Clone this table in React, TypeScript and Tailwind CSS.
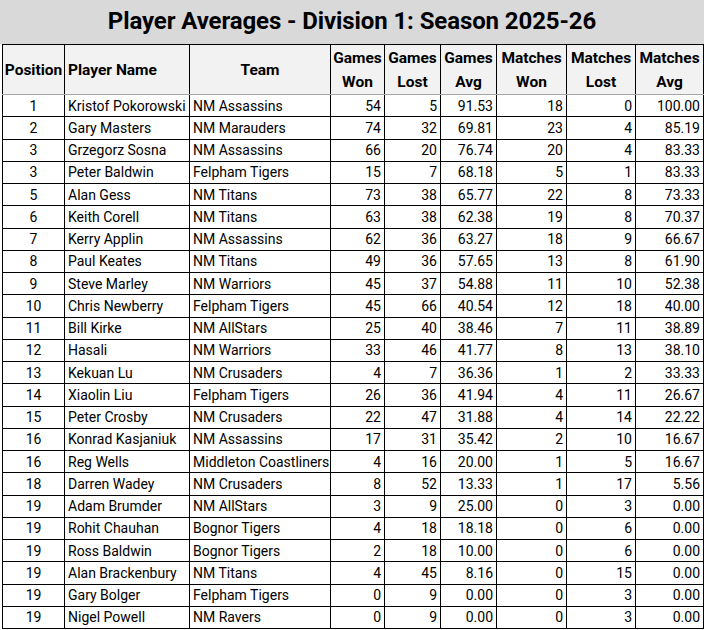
type Row = [string, string, string, number, number, string, number, number, string];

const ROWS: Row[] = [
  ["1", "Kristof Pokorowski", "NM Assassins", 54, 5, "91.53", 18, 0, "100.00"],
  ["2", "Gary Masters", "NM Marauders", 74, 32, "69.81", 23, 4, "85.19"],
  ["3", "Grzegorz Sosna", "NM Assassins", 66, 20, "76.74", 20, 4, "83.33"],
  ["3", "Peter Baldwin", "Felpham Tigers", 15, 7, "68.18", 5, 1, "83.33"],
  ["5", "Alan Gess", "NM Titans", 73, 38, "65.77", 22, 8, "73.33"],
  ["6", "Keith Corell", "NM Titans", 63, 38, "62.38", 19, 8, "70.37"],
  ["7", "Kerry Applin", "NM Assassins", 62, 36, "63.27", 18, 9, "66.67"],
  ["8", "Paul Keates", "NM Titans", 49, 36, "57.65", 13, 8, "61.90"],
  ["9", "Steve Marley", "NM Warriors", 45, 37, "54.88", 11, 10, "52.38"],
  ["10", "Chris Newberry", "Felpham Tigers", 45, 66, "40.54", 12, 18, "40.00"],
  ["11", "Bill Kirke", "NM AllStars", 25, 40, "38.46", 7, 11, "38.89"],
  ["12", "Hasali", "NM Warriors", 33, 46, "41.77", 8, 13, "38.10"],
  ["13", "Kekuan Lu", "NM Crusaders", 4, 7, "36.36", 1, 2, "33.33"],
  ["14", "Xiaolin Liu", "Felpham Tigers", 26, 36, "41.94", 4, 11, "26.67"],
  ["15", "Peter Crosby", "NM Crusaders", 22, 47, "31.88", 4, 14, "22.22"],
  ["16", "Konrad Kasjaniuk", "NM Assassins", 17, 31, "35.42", 2, 10, "16.67"],
  ["16", "Reg Wells", "Middleton Coastliners", 4, 16, "20.00", 1, 5, "16.67"],
  ["18", "Darren Wadey", "NM Crusaders", 8, 52, "13.33", 1, 17, "5.56"],
  ["19", "Adam Brumder", "NM AllStars", 3, 9, "25.00", 0, 3, "0.00"],
  ["19", "Rohit Chauhan", "Bognor Tigers", 4, 18, "18.18", 0, 6, "0.00"],
  ["19", "Ross Baldwin", "Bognor Tigers", 2, 18, "10.00", 0, 6, "0.00"],
  ["19", "Alan Brackenbury", "NM Titans", 4, 45, "8.16", 0, 15, "0.00"],
  ["19", "Gary Bolger", "Felpham Tigers", 0, 9, "0.00", 0, 3, "0.00"],
  ["19", "Nigel Powell", "NM Ravers", 0, 9, "0.00", 0, 3, "0.00"],
];

const COLS = [62, 125, 141, 54, 56, 56, 70, 69, 68];

const HEADERS: [string, string?][] = [
  ["Position"],
  ["Player Name"],
  ["Team"],
  ["Games", "Won"],
  ["Games", "Lost"],
  ["Games", "Avg"],
  ["Matches", "Won"],
  ["Matches", "Lost"],
  ["Matches", "Avg"],
];

export default function App() {
  return (
    <div className="w-[704px] h-[630px] bg-white text-black font-['Roboto',sans-serif]">
      <div className="h-[44px] bg-[#d9d9d9] flex items-center justify-center">
        <h1 className="text-[24px] font-bold tracking-[-0.1px] -mt-[2px]">
          Player Averages - Division 1: Season 2025-26
        </h1>
      </div>
      <table className="ml-[2px] border-collapse table-fixed w-[701px] text-[14px]">
        <colgroup>
          {COLS.map((w, i) => (
            <col key={i} style={{ width: w }} />
          ))}
        </colgroup>
        <thead>
          <tr className="h-[50px] bg-[#f2f2f2]">
            {HEADERS.map(([a, b], i) => (
              <th
                key={i}
                className={
                  "border border-black border-b-[#a6a6a6] font-bold text-[15.5px] leading-[24px] p-0 " +
                  (i === 1 ? "text-left pl-[3px]" : "text-center")
                }
              >
                {a}
                {b && <br />}
                {b}
              </th>
            ))}
          </tr>
        </thead>
        <tbody>
          {ROWS.map((r, i) => (
            <tr key={i} className="h-[22.25px]">
              {r.map((v, j) => (
                <td
                  key={j}
                  className={
                    "border border-black p-0 leading-none whitespace-nowrap overflow-hidden " +
                    (j === 0
                      ? "text-center"
                      : j < 3
                        ? "text-left pl-[3px]"
                        : "text-right pr-[3px]")
                  }
                >
                  {v}
                </td>
              ))}
            </tr>
          ))}
        </tbody>
      </table>
    </div>
  );
}
